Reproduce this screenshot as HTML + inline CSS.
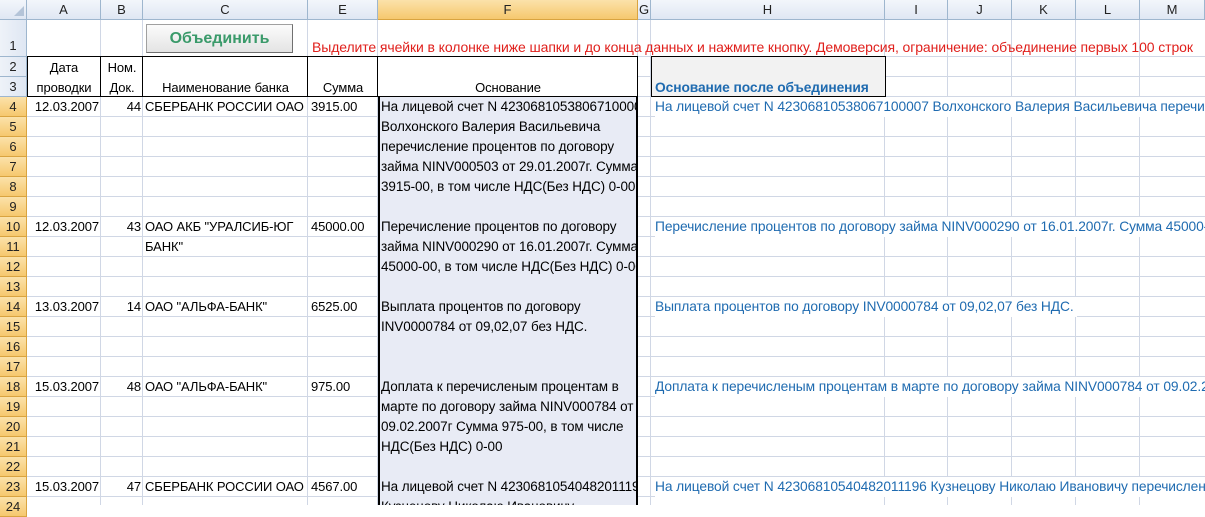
<!DOCTYPE html><html><head><meta charset="utf-8"><style>
body{margin:0;width:1205px;height:505px;overflow:hidden;background:#fff;position:relative;font-family:"Liberation Sans","DejaVu Sans",sans-serif;font-size:13px;color:#000}
div{position:absolute;box-sizing:border-box}
.v{width:1px;background:#d0d7e5;top:20px;height:485px}
.ch{top:0;height:20px;line-height:20px;text-align:center;color:#222;background:linear-gradient(#f3f6fb,#dfe7f3);border-right:1px solid #9eb6ce;border-bottom:1px solid #9eb6ce;font-size:13px}
.rh{left:0;width:27px;height:20px;line-height:20px;text-align:center;color:#222;font-size:13px;background:linear-gradient(to right,#eef2f8,#dfe7f3);border-bottom:1px solid #9eb6ce;border-right:1px solid #9eb6ce}
.rs{background:linear-gradient(#fbe2aa,#f6c86e);border-color:#d9a440}
.t{white-space:nowrap;height:20px;line-height:20px;letter-spacing:-0.1px}
.f .t{font-size:13.5px}
.r{text-align:right}
.h{color:#1f6bb0;background:#fff;padding-right:3px;font-size:13.8px}
</style></head><body>
<div style="left:0;top:57px;width:1205px;height:448px;background:repeating-linear-gradient(to bottom,transparent 0,transparent 19px,#d0d7e5 19px,#d0d7e5 20px)"></div>
<div style="left:0;top:56px;width:1205px;height:1px;background:#d0d7e5"></div>
<div class="v" style="left:100px"></div><div class="v" style="left:142px"></div><div class="v" style="left:307px"></div><div class="v" style="left:377px"></div><div class="v" style="left:637px"></div><div class="v" style="left:650px"></div><div class="v" style="left:884px"></div><div class="v" style="left:947px"></div><div class="v" style="left:1011px"></div><div class="v" style="left:1075px"></div><div class="v" style="left:1139px"></div>
<div style="left:378px;top:97px;width:260px;height:408px;background:#e8ebf5;border-left:2px solid #000;border-right:2px solid #000"></div>
<div style="left:27px;top:56px;width:611px;height:41px;background:#fff;border:1px solid #000"></div>
<div style="left:100px;top:56px;width:1px;height:41px;background:#000"></div>
<div style="left:142px;top:56px;width:1px;height:41px;background:#000"></div>
<div style="left:307px;top:56px;width:1px;height:41px;background:#000"></div>
<div style="left:377px;top:56px;width:1px;height:41px;background:#000"></div>
<div style="left:651px;top:56px;width:235px;height:41px;background:#f2f2f2;border:1px solid #000"></div>
<div class="ch" style="left:0;width:27px"></div>
<div style="left:14px;top:6px;width:0;height:0;border-left:10px solid transparent;border-bottom:10px solid #b4c4d8"></div>
<div class="ch" style="left:27px;width:74px">A</div><div class="ch" style="left:101px;width:42px">B</div><div class="ch" style="left:143px;width:165px">C</div><div class="ch" style="left:308px;width:70px">E</div>
<div class="ch" style="left:378px;width:260px;background:linear-gradient(#fbe2aa,#f6c86e);border-color:#d9a440">F</div>
<div class="ch" style="left:638px;width:13px">G</div><div class="ch" style="left:651px;width:234px">H</div><div class="ch" style="left:885px;width:63px">I</div><div class="ch" style="left:948px;width:64px">J</div><div class="ch" style="left:1012px;width:64px">K</div><div class="ch" style="left:1076px;width:64px">L</div><div class="ch" style="left:1140px;width:65px">M</div>
<div class="rh" style="top:20px;height:37px;line-height:52px">1</div>
<div class="rh" style="top:57px">2</div><div class="rh" style="top:77px">3</div>
<div class="rh rs" style="top:97px">4</div><div class="rh rs" style="top:117px">5</div><div class="rh rs" style="top:137px">6</div><div class="rh rs" style="top:157px">7</div><div class="rh rs" style="top:177px">8</div><div class="rh rs" style="top:197px">9</div><div class="rh rs" style="top:217px">10</div><div class="rh rs" style="top:237px">11</div><div class="rh rs" style="top:257px">12</div><div class="rh rs" style="top:277px">13</div><div class="rh rs" style="top:297px">14</div><div class="rh rs" style="top:317px">15</div><div class="rh rs" style="top:337px">16</div><div class="rh rs" style="top:357px">17</div><div class="rh rs" style="top:377px">18</div><div class="rh rs" style="top:397px">19</div><div class="rh rs" style="top:417px">20</div><div class="rh rs" style="top:437px">21</div><div class="rh rs" style="top:457px">22</div><div class="rh rs" style="top:477px">23</div><div class="rh rs" style="top:497px">24</div>
<div style="left:146px;top:24px;width:147px;height:29px;background:linear-gradient(#fbfbfb,#e4e4e4);border:1px solid #a0a0a0;border-right-color:#707070;border-bottom-color:#707070;text-align:center;line-height:27px;font-weight:bold;font-size:16px;color:#3a9a6a">Объединить</div>
<div class="t" style="left:312px;top:37px;color:#e0201c;font-size:14px;letter-spacing:-0.1px">Выделите ячейки в колонке ниже шапки и до конца данных и нажмите кнопку. Демоверсия, ограничение: объединение первых 100 строк</div>
<div class="t" style="left:27px;top:58px;width:74px;text-align:center">Дата</div>
<div class="t" style="left:27px;top:78px;width:74px;text-align:center">проводки</div>
<div class="t" style="left:101px;top:58px;width:42px;text-align:center">Ном.</div>
<div class="t" style="left:101px;top:78px;width:42px;text-align:center">Док.</div>
<div class="t" style="left:143px;top:78px;width:165px;text-align:center">Наименование банка</div>
<div class="t" style="left:308px;top:78px;width:70px;text-align:center">Сумма</div>
<div class="t" style="left:378px;top:78px;width:260px;text-align:center">Основание</div>
<div class="t" style="left:655px;top:78px;font-weight:bold;color:#1f6bb0;font-size:13.8px">Основание после объединения</div>
<div class="t r" style="left:27px;top:97px;width:72px">12.03.2007</div><div class="t r" style="left:101px;top:97px;width:40px">44</div><div class="t" style="left:145px;top:97px">СБЕРБАНК РОССИИ ОАО</div><div class="t" style="left:311px;top:97px">3915.00</div>
<div class="t r" style="left:27px;top:217px;width:72px">12.03.2007</div><div class="t r" style="left:101px;top:217px;width:40px">43</div><div class="t" style="left:145px;top:217px">ОАО АКБ "УРАЛСИБ-ЮГ</div><div class="t" style="left:145px;top:237px">БАНК"</div><div class="t" style="left:311px;top:217px">45000.00</div>
<div class="t r" style="left:27px;top:297px;width:72px">13.03.2007</div><div class="t r" style="left:101px;top:297px;width:40px">14</div><div class="t" style="left:145px;top:297px">ОАО "АЛЬФА-БАНК"</div><div class="t" style="left:311px;top:297px">6525.00</div>
<div class="t r" style="left:27px;top:377px;width:72px">15.03.2007</div><div class="t r" style="left:101px;top:377px;width:40px">48</div><div class="t" style="left:145px;top:377px">ОАО "АЛЬФА-БАНК"</div><div class="t" style="left:311px;top:377px">975.00</div>
<div class="t r" style="left:27px;top:477px;width:72px">15.03.2007</div><div class="t r" style="left:101px;top:477px;width:40px">47</div><div class="t" style="left:145px;top:477px">СБЕРБАНК РОССИИ ОАО</div><div class="t" style="left:311px;top:477px">4567.00</div>
<div class="f" style="left:380px;top:97px;width:256px;height:408px;overflow:hidden">
<div class="t" style="left:1px;top:0">На лицевой счет N 42306810538067100007</div>
<div class="t" style="left:1px;top:20px">Волхонского Валерия Васильевича</div>
<div class="t" style="left:1px;top:40px">перечисление процентов по договору</div>
<div class="t" style="left:1px;top:60px">займа NINV000503 от 29.01.2007г. Сумма</div>
<div class="t" style="left:1px;top:80px">3915-00, в том числе НДС(Без НДС) 0-00</div>
<div class="t" style="left:1px;top:120px">Перечисление процентов по договору</div>
<div class="t" style="left:1px;top:140px">займа NINV000290 от 16.01.2007г. Сумма</div>
<div class="t" style="left:1px;top:160px">45000-00, в том числе НДС(Без НДС) 0-00</div>
<div class="t" style="left:1px;top:200px">Выплата процентов по договору</div>
<div class="t" style="left:1px;top:220px">INV0000784 от 09,02,07 без НДС.</div>
<div class="t" style="left:1px;top:280px">Доплата к перечисленым процентам в</div>
<div class="t" style="left:1px;top:300px">марте по договору займа NINV000784 от</div>
<div class="t" style="left:1px;top:320px">09.02.2007г Сумма 975-00, в том числе</div>
<div class="t" style="left:1px;top:340px">НДС(Без НДС) 0-00</div>
<div class="t" style="left:1px;top:380px">На лицевой счет N 42306810540482011196</div>
<div class="t" style="left:1px;top:400px">Кузнецову Николаю Ивановичу</div>
</div>
<div class="t h" style="left:655px;top:97px">На лицевой счет N 42306810538067100007 Волхонского Валерия Васильевича перечисление</div>
<div class="t h" style="left:655px;top:217px">Перечисление процентов по договору займа NINV000290 от 16.01.2007г. Сумма 45000-00</div>
<div class="t h" style="left:655px;top:297px">Выплата процентов по договору INV0000784 от 09,02,07 без НДС.</div>
<div class="t h" style="left:655px;top:377px">Доплата к перечисленым процентам в марте по договору займа NINV000784 от 09.02.2007</div>
<div class="t h" style="left:655px;top:477px">На лицевой счет N 42306810540482011196 Кузнецову Николаю Ивановичу перечисление</div>
</body></html>
